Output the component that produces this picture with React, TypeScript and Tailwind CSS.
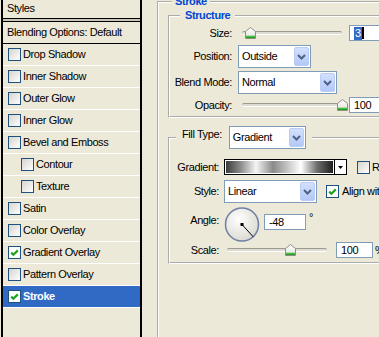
import React from 'react';

const styles = [
  { label: 'Drop Shadow' },
  { label: 'Inner Shadow' },
  { label: 'Outer Glow' },
  { label: 'Inner Glow' },
  { label: 'Bevel and Emboss' },
  { label: 'Contour', indent: true },
  { label: 'Texture', indent: true },
  { label: 'Satin' },
  { label: 'Color Overlay' },
  { label: 'Gradient Overlay', checked: true },
  { label: 'Pattern Overlay' },
  { label: 'Stroke', checked: true, selected: true },
];

function Check({ checked }: { checked?: boolean }) {
  return (
    <span
      className={`flex h-[13px] w-[13px] shrink-0 items-center justify-center border border-[#1C5180] ${
        checked ? 'bg-white' : 'bg-gradient-to-br from-[#D6D4CC] to-white'
      }`}
    >
      {checked && (
        <svg width="9" height="8" viewBox="0 0 9 8">
          <path d="M1.2 3.6 L3.4 5.8 L7.8 1.4" stroke="#21A121" strokeWidth="2.2" fill="none" />
        </svg>
      )}
    </span>
  );
}

function Select({ width, value }: { width: string; value: string }) {
  return (
    <div className={`flex h-[23px] shrink-0 items-stretch border border-[#7F9DB9] bg-white ${width}`}>
      <span className="flex flex-1 items-center pl-[3px]">{value}</span>
      <span className="my-px mr-px flex w-[15px] items-center justify-center rounded-[2px] border border-[#BACBF5] bg-gradient-to-b from-[#D3E0FD] to-[#B2C8F7]">
        <svg width="9" height="6" viewBox="0 0 9 6">
          <path d="M1 1 L4.5 4.5 L8 1" stroke="#4D6185" strokeWidth="2" fill="none" />
        </svg>
      </span>
    </div>
  );
}

function Slider({ left, width = 'w-[100px]' }: { left: number; width?: string }) {
  return (
    <div className={`relative flex h-[12px] shrink-0 items-center ${width}`}>
      <div className="h-[4px] w-full rounded-full border-t border-[#9C9B92] border-b border-b-white bg-[#DEDCD2]" />
      <svg className="absolute top-0" style={{ left }} width="11" height="12" viewBox="0 0 11 12">
        <defs>
          <linearGradient id="thumb" x1="0" y1="0" x2="0" y2="1">
            <stop offset="0" stopColor="#ffffff" />
            <stop offset="1" stopColor="#E3E2DA" />
          </linearGradient>
        </defs>
        <path d="M0.5 4.5 L5.5 0.5 L10.5 4.5 L10.5 11.5 L0.5 11.5 Z" fill="url(#thumb)" stroke="#8F8E86" />
        <rect x="1" y="9" width="9" height="2" fill="#21A121" />
        <rect x="1" y="8.5" width="9" height="1" fill="#7BD27B" />
      </svg>
    </div>
  );
}

function Field({ width, children }: { width: string; children: React.ReactNode }) {
  return (
    <div className={`flex h-[16px] shrink-0 items-center border border-[#7F9DB9] bg-white px-[4px] ${width}`}>
      {children}
    </div>
  );
}

function Label({ width, children }: { width: string; children: React.ReactNode }) {
  return <span className={`shrink-0 text-right ${width}`}>{children}</span>;
}

export default function App() {
  return (
    <div className="flex h-[337px] w-[379px] overflow-hidden bg-[#ECE9D8] font-['Liberation_Sans',Arial,sans-serif] text-[11px] leading-[13px] tracking-[-0.4px] text-black">
      {/* style list */}
      <div className="ml-px flex w-[141px] shrink-0 flex-col border-x-2 border-black">
        <div className="flex h-[18px] items-center pb-[2px] pl-[4px]">Styles</div>
        <div className="h-[4px] border-y border-black bg-[#C9C6B6]" />
        <div className="flex h-[22px] items-center border-b border-black pl-[4px]">Blending Options: Default</div>
        {styles.map((s) => (
          <div
            key={s.label}
            className={`flex h-[22px] items-center gap-[2px] border-b border-white ${s.indent ? 'pl-[18px]' : 'pl-[5px]'} ${
              s.selected ? 'bg-[#316AC5] font-bold text-white' : ''
            }`}
          >
            <Check checked={s.checked} />
            <span>{s.label}</span>
          </div>
        ))}
      </div>

      {/* settings */}
      <div className="min-w-0 flex-1 pl-[15px]">
        <fieldset className="mt-[-5px] h-[360px] w-[260px] border-2 border-white px-[9px] pt-px [border-style:groove]">
          <legend className="ml-[4px] px-[3px] font-bold text-[#0046D5]">Stroke</legend>

          <fieldset className="w-[240px] border-2 border-white pb-[3px] [border-style:groove]">
            <legend className="ml-[10px] px-[5px] font-bold text-[#0046D5]">Structure</legend>
            <div className="mt-[3px] flex items-center">
              <Label width="w-[62px]">Size:</Label>
              <div className="ml-[10px]">
                <Slider left={3} />
              </div>
              <div className="ml-[7px]">
                <Field width="w-[37px]">
                  <span className="bg-[#316AC5] px-px text-white">3</span>
                  <span className="h-[12px] w-[2px] bg-black" />
                </Field>
              </div>
            </div>
            <div className="mt-[4px] flex items-center">
              <Label width="w-[62px]">Position:</Label>
              <div className="ml-[6px]">
                <Select width="w-[73px]" value="Outside" />
              </div>
            </div>
            <div className="mt-[3px] flex items-center">
              <Label width="w-[62px]">Blend Mode:</Label>
              <div className="ml-[6px]">
                <Select width="w-[99px]" value="Normal" />
              </div>
            </div>
            <div className="mt-[3px] flex items-center">
              <Label width="w-[62px]">Opacity:</Label>
              <div className="ml-[10px]">
                <Slider left={95} width="w-[104px]" />
              </div>
              <div className="ml-[3px]">
                <Field width="w-[37px]">100</Field>
              </div>
            </div>
          </fieldset>

          <fieldset className="mt-[8px] w-[240px] border-2 border-white pb-[4px] [border-style:groove]">
            <legend className="ml-[6px] mt-[8px] px-[6px]">
              <div className="flex items-start">
                <span className="mt-[2px]">Fill Type:</span>
                <div className="ml-[7px]">
                  <Select width="w-[77px]" value="Gradient" />
                </div>
              </div>
            </legend>
            <div className="mt-[10px] flex items-center">
              <Label width="w-[49px]">Gradient:</Label>
              <div className="ml-[5px] flex h-[16px]">
                <div className="w-[111px] border border-black bg-white p-px">
                  <div className="h-full bg-[linear-gradient(90deg,#3c3c3c_0%,#8e8e8e_14%,#f5f5f5_28%,#8a8a8a_44%,#c8c8c8_58%,#ffffff_70%,#6e6e6e_85%,#1e1e1e_100%)]" />
                </div>
                <div className="flex w-[12px] items-center justify-center border border-l-0 border-black bg-white">
                  <svg width="5" height="3" viewBox="0 0 5 3">
                    <path d="M0 0 H5 L2.5 3 Z" fill="#000" />
                  </svg>
                </div>
              </div>
              <div className="ml-[10px]">
                <Check />
              </div>
              <span className="ml-[2px] whitespace-nowrap">Reverse</span>
            </div>
            <div className="mt-[5px] flex items-center">
              <Label width="w-[49px]">Style:</Label>
              <div className="ml-[5px]">
                <Select width="w-[93px]" value="Linear" />
              </div>
              <div className="ml-[9px]">
                <Check checked />
              </div>
              <span className="ml-[3px] whitespace-nowrap">Align with Layer</span>
            </div>
            <div className="mt-[4px] flex items-start">
              <span className="mt-[7px]">
                <Label width="w-[49px] block">Angle:</Label>
              </span>
              <svg className="ml-[5px] shrink-0" width="36" height="35" viewBox="0 0 36 35">
                <defs>
                  <radialGradient id="dial" cx="0.4" cy="0.35" r="0.7">
                    <stop offset="0" stopColor="#ffffff" />
                    <stop offset="1" stopColor="#D9D8D0" />
                  </radialGradient>
                </defs>
                <circle cx="18" cy="17.5" r="16.5" fill="url(#dial)" stroke="#6F7FA6" strokeWidth="1.5" />
                <line x1="18" y1="17.5" x2="29.2" y2="29.8" stroke="#000" strokeWidth="1" />
                <rect x="16.5" y="16" width="3" height="3" fill="#000" />
              </svg>
              <div className="ml-[4px] mt-[7px]">
                <Field width="w-[42px]">-48</Field>
              </div>
              <span className="ml-[3px] mt-[4px]">°</span>
            </div>
            <div className="flex items-center">
              <Label width="w-[49px]">Scale:</Label>
              <div className="ml-[8px]">
                <Slider left={58} />
              </div>
              <div className="ml-[9px]">
                <Field width="w-[37px]">100</Field>
              </div>
              <span className="ml-[2px]">%</span>
            </div>
          </fieldset>
        </fieldset>
      </div>
    </div>
  );
}
